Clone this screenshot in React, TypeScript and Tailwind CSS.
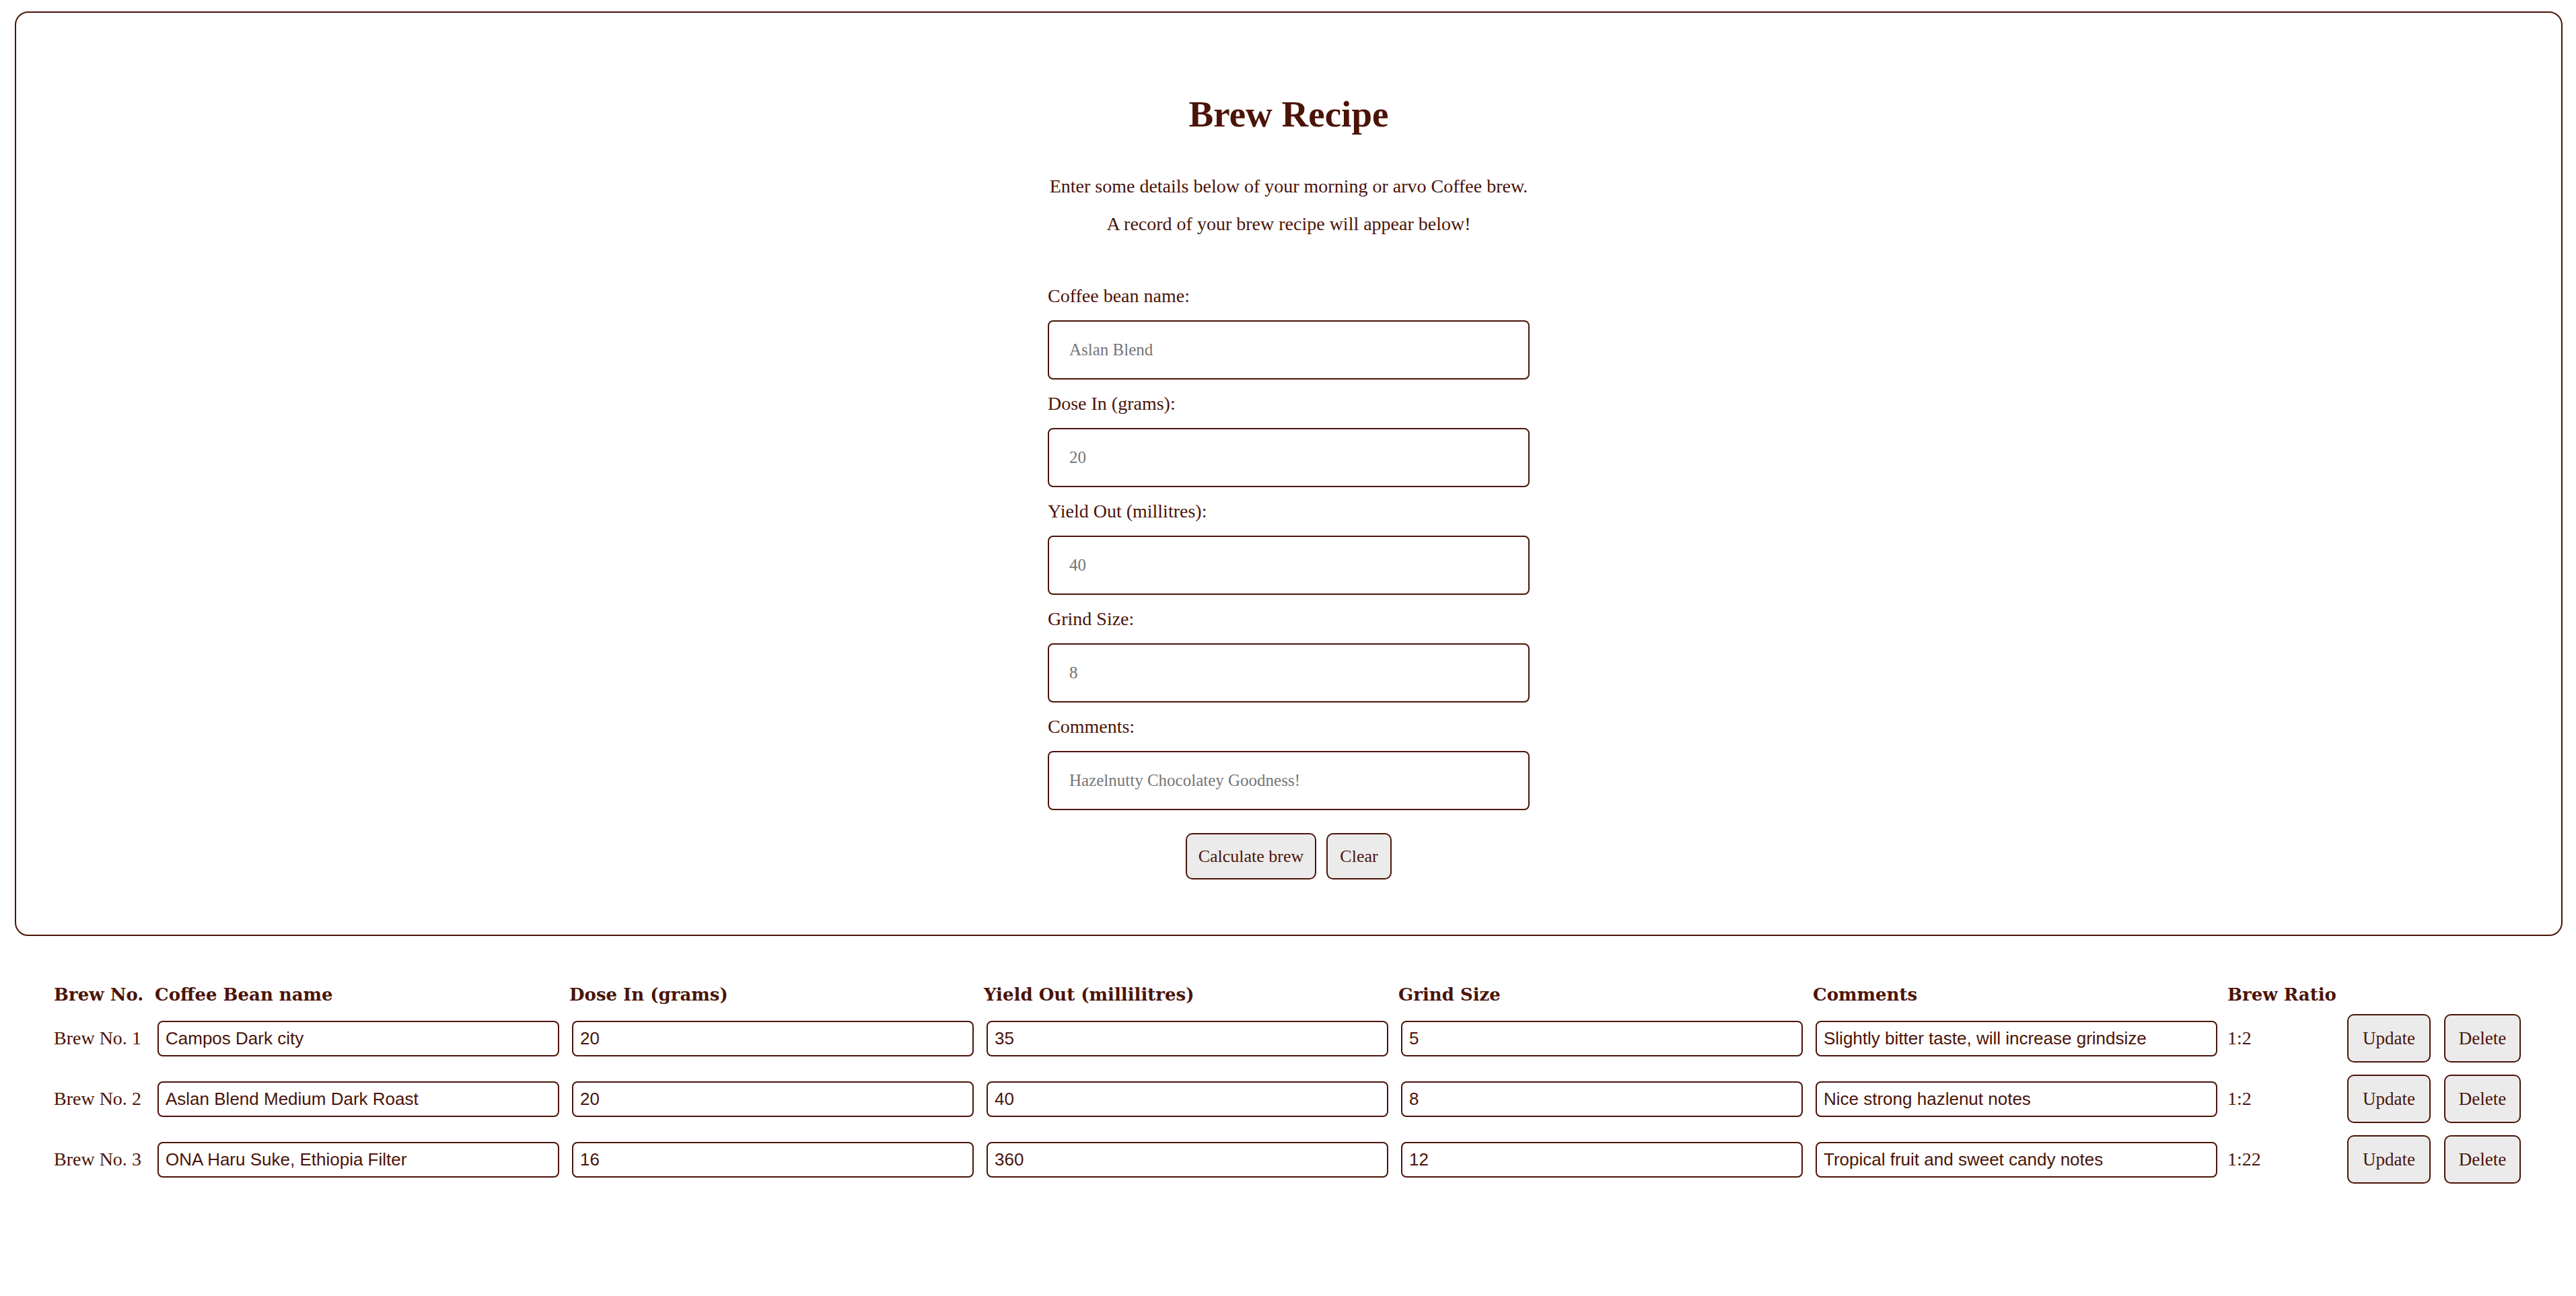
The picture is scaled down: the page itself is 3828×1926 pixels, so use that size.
const SERIF = "font-['Liberation_Serif','Times_New_Roman',serif]";

type Brew = { id: number; bean: string; dose: string; yieldOut: string; grind: string; comments: string; ratio: string };

const BREWS: Brew[] = [
  { id: 1, bean: "Campos Dark city", dose: "20", yieldOut: "35", grind: "5", comments: "Slightly bitter taste, will increase grindsize", ratio: "1:2" },
  { id: 2, bean: "Aslan Blend Medium Dark Roast", dose: "20", yieldOut: "40", grind: "8", comments: "Nice strong hazlenut notes", ratio: "1:2" },
  { id: 3, bean: "ONA Haru Suke, Ethiopia Filter", dose: "16", yieldOut: "360", grind: "12", comments: "Tropical fruit and sweet candy notes", ratio: "1:22" },
];

const FIELDS = [
  { label: "Coffee bean name:", placeholder: "Aslan Blend" },
  { label: "Dose In (grams):", placeholder: "20" },
  { label: "Yield Out (millitres):", placeholder: "40" },
  { label: "Grind Size:", placeholder: "8" },
  { label: "Comments:", placeholder: "Hazelnutty Chocolatey Goodness!" },
];

const HEADERS = ["Brew No.", "Coffee Bean name", "Dose In (grams)", "Yield Out (millilitres)", "Grind Size", "Comments", "Brew Ratio", ""];

function CellInput({ value }: { value: string }) {
  return (
    <input
      defaultValue={value}
      className="ml-[4px] h-[53px] w-[597px] rounded-[8px] border-2 border-[#4b1408] bg-white pl-[10px] font-['Liberation_Sans',Arial,sans-serif] text-[26px] text-[#4b1408] outline-none"
    />
  );
}

function RowButton({ children, width }: { children: string; width: string }) {
  return (
    <button
      type="button"
      className={`h-[72px] ${width} rounded-[10px] border-2 border-[#4b1408] bg-[#ebebeb] text-[27px] text-[#4b1408] ${SERIF}`}
    >
      {children}
    </button>
  );
}

export default function App() {
  return (
    <div className={`min-h-[1926px] bg-white pt-[17px] pl-[22px] pr-[20px] text-[#4b1408] ${SERIF}`}>
      <section className="flex flex-col items-center rounded-[20px] border-2 border-[#4b1408] pt-[123px] pb-[82px]">
        <h1 className="text-[55px] font-bold leading-none">Brew Recipe</h1>
        <p className="mt-[65px] text-[28px] leading-[30px]">
          Enter some details below of your morning or arvo Coffee brew.
        </p>
        <p className="mt-[26px] text-[28px] leading-[30px]">A record of your brew recipe will appear below!</p>

        <form className="mt-[77px] flex w-[716px] flex-col" onSubmit={(e) => e.preventDefault()}>
          {FIELDS.map((f, i) => (
            <label key={f.label} className={i > 0 ? "mt-[21px] block" : "block"}>
              <span className="block text-[28px] leading-[30px]">{f.label}</span>
              <input
                placeholder={f.placeholder}
                className={`mt-[21px] block h-[88px] w-full rounded-[8px] border-2 border-[#4b1408] bg-white pl-[30px] text-[25px] text-[#4b1408] outline-none placeholder:text-[#757575] ${SERIF}`}
              />
            </label>
          ))}
          <div className="mt-[34px] flex justify-center gap-[15px]">
            <button
              type="submit"
              className={`h-[69px] w-[194px] rounded-[10px] border-2 border-[#4b1408] bg-[#ebebeb] text-[26px] text-[#4b1408] ${SERIF}`}
            >
              Calculate brew
            </button>
            <button
              type="reset"
              className={`h-[69px] w-[97px] rounded-[10px] border-2 border-[#4b1408] bg-[#ebebeb] text-[26px] text-[#4b1408] ${SERIF}`}
            >
              Clear
            </button>
          </div>
        </form>
      </section>

      <div className="mt-[72px] pl-[58px]">
        <div className="grid grid-cols-[150px_616px_616px_616px_616px_616px_178px_auto] text-[28px]">
          {HEADERS.map((h, i) => (
            <div key={i} className="h-[35px] font-['DejaVu_Serif',Georgia,serif] text-[26px] font-bold leading-[30px]">
              {h}
            </div>
          ))}
          {BREWS.map((b) => (
            <div key={b.id} className="col-span-8 grid h-[90px] grid-cols-subgrid items-center">
              <span className="leading-[30px]">Brew No. {b.id}</span>
              <CellInput value={b.bean} />
              <CellInput value={b.dose} />
              <CellInput value={b.yieldOut} />
              <CellInput value={b.grind} />
              <CellInput value={b.comments} />
              <span className="leading-[30px]">{b.ratio}</span>
              <div className="flex gap-[20px]">
                <RowButton width="w-[124px]">Update</RowButton>
                <RowButton width="w-[114px]">Delete</RowButton>
              </div>
            </div>
          ))}
        </div>
      </div>
    </div>
  );
}
